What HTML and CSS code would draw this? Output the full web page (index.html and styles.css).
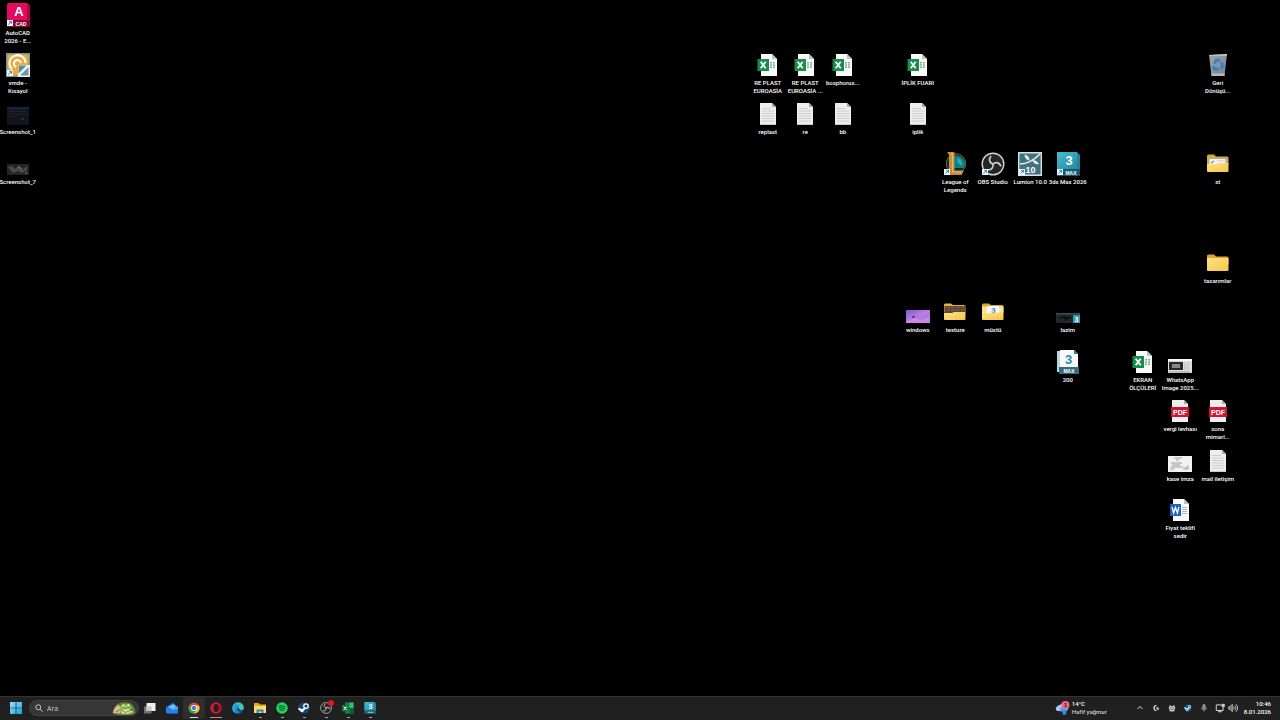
FILE: index.html
```html
<!DOCTYPE html>
<html lang="tr">
<head>
<meta charset="utf-8">
<title>Masaüstü</title>
<link rel="stylesheet" href="styles.css">
</head>
<body>
<svg class="defs" aria-hidden="true">
  <defs>
    <linearGradient id="g-folder" x1="0" y1="0" x2="1" y2="1"><stop offset="0" stop-color="#ffe28a"/><stop offset="1" stop-color="#f6c545"/></linearGradient>
    <linearGradient id="g-purple" x1="0" y1="0" x2="1" y2="1"><stop offset="0" stop-color="#6f63c9"/><stop offset=".5" stop-color="#c07be0"/><stop offset="1" stop-color="#6d7df0"/></linearGradient>
    <linearGradient id="g-bin" x1="0" y1="0" x2="1" y2="1"><stop offset="0" stop-color="#a3a6a9"/><stop offset="1" stop-color="#7d8184"/></linearGradient>
    <linearGradient id="g-edge" x1="0" y1="0" x2="1" y2="1"><stop offset="0" stop-color="#2fb3e8"/><stop offset="1" stop-color="#0b59b0"/></linearGradient>
    <linearGradient id="g-win" x1="0" y1="0" x2="1" y2="1"><stop offset="0" stop-color="#8fe4fb"/><stop offset="1" stop-color="#18a0e4"/></linearGradient>
    <linearGradient id="g-max" x1="0" y1="0" x2="1" y2="1"><stop offset="0" stop-color="#45bdd0"/><stop offset="1" stop-color="#238ba4"/></linearGradient>
  </defs>
  <symbol id="arrow" viewBox="0 0 24 24"><path d="M1 17h6v6H1z" fill="#f3f8fc"/><path d="M2.300 21.700 5.400 18.600M3.200 18.400h2.400v2.400" fill="none" stroke="#1676bd" stroke-width=".9"/></symbol>
  <symbol id="excel" viewBox="0 0 24 24"><path d="M5 1h11l5 5v17H5z" fill="#fafafa"/><path d="M16 1v5h5z" fill="#bfc3c2"/><path d="M14 9h2v1.500h-2zM17 9h2v1.500h-2zM14 11.300h2v1.500h-2zM17 11.300h2v1.500h-2zM14 13.600h2v1.500h-2zM17 13.600h2v1.500h-2z" fill="#79b694"/><path d="M1.500 6H13v12H1.500z" fill="#178c4b"/><path d="m4.700 8.700 5 6.600m0-6.600-5 6.600" stroke="#fff" stroke-width="1.800"/></symbol>
  <symbol id="text" viewBox="0 0 24 24"><path d="M4 1h12l4 4v18H4z" fill="#ededed"/><path d="M16 1v4h4z" fill="#a9a9a9"/><path d="M6 6.500h9M6 9h12M6 11.500h12M6 14h12M6 16.500h12M6 19h12" stroke="#c5c5c5" stroke-width=".8"/><path d="M4 22h16v1H4z" fill="#c9c9c9"/></symbol>
  <symbol id="word" viewBox="0 0 24 24"><path d="M5 1h11l5 5v17H5z" fill="#fafafa"/><path d="M16 1v5h5z" fill="#bfc3c2"/><path d="M14 9.500h5M14 11.500h5M14 13.500h5M14 15.500h5" stroke="#9fbbe2"/><path d="M2 6h11v12H2z" fill="#2361b8"/><path d="m4 8.800 1.600 6.200L7.500 9.500 9.400 15 11 8.800" fill="none" stroke="#fff" stroke-width="1.300"/></symbol>
  <symbol id="pdf" viewBox="0 0 24 24"><path d="M4 1h12l4 4v18H4z" fill="#eee"/><path d="M16 1v4h4z" fill="#aaa"/><path d="M3 8h18v10H3z" fill="#cf1632"/></symbol>
  <symbol id="folder" viewBox="0 0 24 24"><path d="M1 5q0-1.500 1.500-1.500H8L10 5.500h11q1.500 0 1.500 1.500v6H1z" fill="#dda62e"/><path d="M1 7h21.500v12q0 1-1 1H2q-1 0-1-1z" fill="url(#g-folder)"/></symbol>
  <symbol id="max" viewBox="0 0 24 24"><path d="M1 1q0-1 1-1h19l3 3v21H1z" fill="#278198"/><path d="M1 1q0-1 1-1h19v17H1z" fill="url(#g-max)"/><path d="M1 17h23v7H1z" fill="#18566a"/></symbol>
  <symbol id="obs" viewBox="0 0 24 24"><circle cx="12" cy="12" r="10.800" fill="#252527" stroke="#d3d3d3" stroke-width="1.400"/><g fill="none" stroke="#cfcfcf" stroke-width="1.700"><path d="M10 4C7 8 9 11 12 12"/><path d="M10 4C7 8 9 11 12 12" transform="rotate(120 12 12)"/><path d="M10 4C7 8 9 11 12 12" transform="rotate(240 12 12)"/></g></symbol>
</svg>

<main class="desktop">
  <button class="item c1 r1"><span class="art"><svg viewBox="0 0 24 24"><path d="M1 2q0-2 2-2h18l3 2v20q0 2-2 2H1z" fill="#a80643"/><path d="M1 2q0-2 2-2h18v17H1z" fill="#e20b5c"/><path d="M1 17h23v7H1z" fill="#850535"/><text x="13" y="12.800" text-anchor="middle" class="glyph" font-size="13">A</text><text x="15" y="22.500" text-anchor="middle" class="glyph" font-size="5">CAD</text></svg><svg class="shortcut"><use href="#arrow"/></svg></span><span class="label">AutoCAD<br>2026 - E...</span></button>
  <button class="item c1 r2"><span class="art"><svg viewBox="0 0 24 24"><path d="M0 0h24v24H0z" fill="#6e98a5"/><path d="M1.500 1.500h21v21h-21z" fill="#e9ae39"/><path d="M6 16a8 8 0 1 1 13.500-6" fill="none" stroke="#fff" stroke-width="2"/><path d="M10 14a3.600 3.600 0 1 1 5-4" fill="none" stroke="#fff" stroke-width="2"/><path d="M12 12h12v12H12z" fill="#edf4f6"/><path d="m14 22.500 8.500-8.500v8.500z" fill="#6e98a5"/><path d="m12.500 20.500 8-8h-8z" fill="#5b899a"/></svg><svg class="shortcut"><use href="#arrow"/></svg></span><span class="label">vmde -<br>Kısayol</span></button>
  <button class="item c1 r3"><span class="art"><svg viewBox="0 0 24 24"><path d="M1 5h22v18H1z" fill="#12151b"/><path d="M1 5h22v2.500H1z" fill="#142343"/><path d="M3 9.500h17M3 12h18M3 14.500h8" stroke="#20242d"/><path d="M15 17h3" stroke="#3d434f"/></svg></span><span class="label">Screenshot_1</span></button>
  <button class="item c1 r4"><span class="art"><svg viewBox="0 0 24 24"><path d="M1 12h22v11H1z" fill="#252525"/><path d="m2 15 4-1 3 3 4-4 3 5 5-4v4l-5 3-4-2-5 2z" fill="#666" opacity=".6"/><path d="m13 15 3 2m3 4h2" stroke="#888"/></svg></span><span class="label">Screenshot_7</span></button>
  <button class="item c21 r2"><span class="art"><svg><use href="#excel"/></svg></span><span class="label">RE PLAST<br>EUROASİA</span></button>
  <button class="item c22 r2"><span class="art"><svg><use href="#excel"/></svg></span><span class="label">RE PLAST<br>EUROASİA ...</span></button>
  <button class="item c23 r2"><span class="art"><svg><use href="#excel"/></svg></span><span class="label">bosphorus...</span></button>
  <button class="item c25 r2"><span class="art"><svg><use href="#excel"/></svg></span><span class="label">İPLİK FUARI</span></button>
  <button class="item c33 r2"><span class="art"><svg viewBox="0 0 24 24"><path d="m3 2 18-1-2.500 22h-13z" fill="url(#g-bin)"/><path d="m3 2 18-1-.200 1.800H3.200z" fill="#c9ccce"/><path d="m5.500 20.500 13.200-.300-.200 2.800h-13z" fill="#b5b8ba"/><g fill="none" stroke="#2684d2" stroke-width="2.800"><path d="m8.500 10.500 2-3.500 3.500.500M15 9l1.800 4-2.300 2.500M12.500 16.500l-4.500-.500-.500-3"/></g></svg></span><span class="label">Geri<br>Dönüşü...</span></button>
  <button class="item c21 r3"><span class="art"><svg><use href="#text"/></svg></span><span class="label">replast</span></button>
  <button class="item c22 r3"><span class="art"><svg><use href="#text"/></svg></span><span class="label">re</span></button>
  <button class="item c23 r3"><span class="art"><svg><use href="#text"/></svg></span><span class="label">bb</span></button>
  <button class="item c25 r3"><span class="art"><svg><use href="#text"/></svg></span><span class="label">iplik</span></button>
  <button class="item c26 r4"><span class="art"><svg viewBox="0 0 24 24"><circle cx="13" cy="11.500" r="9.700" fill="#082c34" stroke="#806438"/><path d="M11 4a8.500 8.500 0 0 1 10 12H11z" fill="#0e7f89"/><path d="M14 6q6 1 5 8l-4-3z" fill="#2cb0a7"/><path d="M4 0h7.500v18.500H21L18.500 23H4l2-3V3z" fill="#c58e3c"/><path d="M7.500 2h2.200v18H18" fill="none" stroke="#edbf6a"/></svg><svg class="shortcut"><use href="#arrow"/></svg></span><span class="label">League of<br>Legends</span></button>
  <button class="item c27 r4"><span class="art"><svg><use href="#obs"/></svg><svg class="shortcut"><use href="#arrow"/></svg></span><span class="label">OBS Studio</span></button>
  <button class="item c28 r4"><span class="art"><svg viewBox="0 0 24 24"><path d="M.700.700h22.600v22.600H.700z" fill="#43727f" stroke="#d3e3e6" stroke-width="1.400"/><path d="M2 12Q12 12 22 2" fill="none" stroke="#e5eff1" stroke-width="1.600"/><path d="M6.500 2.500q5 1 5 6-5-1-5-6M14 8q4-.500 7 4-5 1-7-4" fill="#e5eff1"/><text x="12.500" y="21" text-anchor="middle" class="glyph" font-size="9">10</text></svg><svg class="shortcut"><use href="#arrow"/></svg></span><span class="label">Lumion 10.0</span></button>
  <button class="item c29 r4"><span class="art"><svg viewBox="0 0 24 24"><use href="#max"/><text x="13" y="13" text-anchor="middle" class="glyph" font-size="13">3</text><text x="15" y="22.500" text-anchor="middle" class="glyph" font-size="5">MAX</text></svg><svg class="shortcut"><use href="#arrow"/></svg></span><span class="label">3ds Max 2026</span></button>
  <button class="item c33 r4"><span class="art"><svg viewBox="0 0 24 24"><path d="M1 4q0-1.500 1.500-1.500H8L10 4.500h11q1.500 0 1.500 1.500v6H1z" fill="#dda62e"/><path d="M2.500 5.500h19V12h-19z" fill="#b9ad91"/><path d="M3.500 7h16v6h-16z" fill="#f4f4f4"/><path d="m5 11 3-2" stroke="#555"/><path d="M11 9h8" stroke="#ccc"/><path d="M1 12h8l2-1h11.500v8q0 1-1 1H2q-1 0-1-1z" fill="url(#g-folder)"/></svg></span><span class="label">st</span></button>
  <button class="item c33 r6"><span class="art"><svg><use href="#folder"/></svg></span><span class="label">tasarımlar</span></button>
  <button class="item c25 r7"><span class="art"><svg viewBox="0 0 24 24"><path d="M0 10h24v13H0z" fill="url(#g-purple)"/><path d="m0 22 8-4 7 2 9-4v7H0z" fill="#df8be4" opacity=".75"/><path d="M6 17h3M7.500 16v2" stroke="#31286c"/></svg></span><span class="label">windows</span></button>
  <button class="item c26 r7"><span class="art"><svg viewBox="0 0 24 24"><path d="M1 5q0-1.500 1.500-1.500H8L10 5h11q1.500 0 1.500 1.500v6H1z" fill="#e8b53c"/><path d="M1.500 6h20.500v7H1.500z" fill="#5b4638"/><path d="M3 7.500h18M3 10h18" stroke="#7b6352" stroke-dasharray="4 1"/><path d="M1 13h8l2-1h11.500v7q0 1-1 1H2q-1 0-1-1z" fill="url(#g-folder)"/></svg></span><span class="label">texture</span></button>
  <button class="item c27 r7"><span class="art"><svg viewBox="0 0 24 24"><path d="M1 5q0-1.500 1.500-1.500H8L10 5h11q1.500 0 1.500 1.500v6H1z" fill="#dda62e"/><path d="M1 6.500h21.500V13H1z" fill="#ffe28a"/><path d="M6 6h12l1 8H6z" fill="#f5f9fb"/><text x="12.500" y="12.500" text-anchor="middle" class="glyph blue" font-size="8">3</text><path d="M1 13h8l2-.500h11.500V19q0 1-1 1H2q-1 0-1-1z" fill="url(#g-folder)"/></svg></span><span class="label">müstü</span></button>
  <button class="item c29 r7"><span class="art"><svg viewBox="0 0 24 24"><path d="M0 13h24v10H0z" fill="#20282a"/><path d="M0 13h24v1.500H0z" fill="#424b4e"/><path d="m3 18 5-1 3 2 4-2M9 16v5" stroke="#090909"/><path d="M17 15h7v8h-7z" fill="#319bae"/><text x="20.500" y="21.500" text-anchor="middle" class="glyph" font-size="7">3</text></svg></span><span class="label">lazim</span></button>
  <button class="item c29 r8"><span class="art"><svg viewBox="0 0 24 24"><path d="M1 1h16l4 4v17H1z" fill="#b5d8dc"/><path d="M4 0h14l4 4v14H4z" fill="#f8fbfc"/><path d="M18 0v4h4z" fill="#347f73"/><path d="M3 17h20v7H3z" fill="#356b7c"/><text x="12.500" y="13.500" text-anchor="middle" class="glyph blue" font-size="13">3</text><text x="13" y="22.500" text-anchor="middle" class="glyph" font-size="5">MAX</text></svg></span><span class="label">200</span></button>
  <button class="item c31 r8"><span class="art"><svg><use href="#excel"/></svg></span><span class="label">EKRAN<br>ÖLÇÜLERİ</span></button>
  <button class="item c32 r8"><span class="art"><svg viewBox="0 0 24 24"><path d="M0 9h24v14H0z" fill="#ddd"/><path d="M0 9h24v2H0z" fill="#f8f8f8"/><path d="M1 12h14v8H1z" fill="#282828"/><path d="M4 14h8v4H4z" fill="#898683"/><path d="M17 13v7M20 13v7" stroke="#bbb"/><path d="M1 22h21" stroke="#999"/></svg></span><span class="label">WhatsApp<br>Image 2025...</span></button>
  <button class="item c32 r9"><span class="art"><svg viewBox="0 0 24 24"><use href="#pdf"/><text x="12" y="15.500" text-anchor="middle" class="glyph" font-size="7">PDF</text></svg></span><span class="label">vergi levhası</span></button>
  <button class="item c33 r9"><span class="art"><svg viewBox="0 0 24 24"><use href="#pdf"/><text x="12" y="15.500" text-anchor="middle" class="glyph" font-size="7">PDF</text></svg></span><span class="label">sona<br>mimarl...</span></button>
  <button class="item c32 r10"><span class="art"><svg viewBox="0 0 24 24"><path d="M0 7h24v16H0z" fill="#f2f2f2"/><g stroke="#777" stroke-width=".7"><path d="M6 9h8M8 11h3M3 14h11M4 16h8M3 18h12M2 20h4m9 0 6-3m-4 4 4-2"/></g></svg></span><span class="label">kase imza</span></button>
  <button class="item c33 r10"><span class="art"><svg><use href="#text"/></svg></span><span class="label">mail iletişim</span></button>
  <button class="item c32 r11"><span class="art"><svg><use href="#word"/></svg></span><span class="label">Fiyat teklifi<br>sedir</span></button>
</main>

<footer class="taskbar">
  <button class="task" aria-label="Başlat"><svg viewBox="0 0 24 24"><path d="M0 0h11.300v11.300H0zM12.700 0H24v11.300H12.700zM0 12.700h11.300V24H0zM12.700 12.700H24V24H12.700z" fill="url(#g-win)"/></svg></button>
  <label class="search">
    <svg class="lens" viewBox="0 0 16 16"><circle cx="6.500" cy="6.500" r="5" fill="none" stroke="#e6e6e6" stroke-width="1.600"/><path d="m10.500 10.500 4.500 4.500" stroke="#e6e6e6" stroke-width="1.900"/></svg>
    <input type="text" placeholder="Ara" aria-label="Ara">
    <svg class="highlight" viewBox="0 0 48 26"><path d="M1 23Q3 8 13 3 25-1 36 2q10 6 11 20-7 4-22 4T1 23" fill="#5b8a35"/><path d="M2 22Q5 9 13 6l6 7-3 10z" fill="#dfb98b"/><path d="M16 12q3-9 12-7 8-2 11 6-3 7-12 6-9 1-11-5" fill="#9fc45d"/><path d="m19 16 12-3 12 7-11 4-14-1z" fill="#d8df9a"/><path d="M19 11q8 5 17-1M7 20l10-5 10 6 12-5" fill="none" stroke="#4f7a35" stroke-width="1.500"/><circle cx="22" cy="7" r="2" fill="#eef2b9"/><circle cx="33" cy="6" r="2" fill="#eef2b9"/><path d="m35 20 9 2-8 3z" fill="#d58f72"/></svg>
  </label>
  <button class="task" aria-label="Görev görünümü"><svg viewBox="0 0 24 24"><path d="M0 9h15v14H0z" fill="#737373"/><path d="M5 2h18v16H5z" fill="#efefef"/><path d="M5 9h10v9H5z" fill="#c4c4c4"/></svg></button>
  <button class="task" aria-label="Posta"><svg viewBox="0 0 24 24"><path d="M0 10 14 1l10 9v10q0 3-3 3H4q-4 0-4-4z" fill="#1762c7"/><path d="m3 10 12-6 6 6-8 6z" fill="#69bdf5"/><path d="m0 10 12 7L24 9v11q0 3-3 3H4q-4 0-4-4z" fill="#2381e8"/><path d="m12 17 12-8v4z" fill="#65b8f7"/></svg></button>
  <button class="task running active" aria-label="Chrome"><svg viewBox="0 0 24 24"><circle cx="12" cy="12" r="11" fill="#e34133"/><path d="M2.500 6.500A11 11 0 0 0 12 23l5-8z" fill="#2ca853"/><path d="M22 7H12l5 8-5 8A11 11 0 0 0 22 7" fill="#fbc02e"/><circle cx="12" cy="12" r="5.800" fill="#fff"/><circle cx="12" cy="12" r="4.400" fill="#397de6"/></svg></button>
  <button class="task running opera" aria-label="Opera"><svg viewBox="0 0 24 24"><circle cx="12" cy="12" r="11.500" fill="#d91838"/><ellipse cx="12" cy="12" rx="5" ry="8" fill="#202020"/><path d="M15 5q6 7 0 14 7-2 7-7t-7-7" fill="#8e142d"/></svg></button>
  <button class="task" aria-label="Edge"><svg viewBox="0 0 24 24"><circle cx="12" cy="12" r="11.500" fill="url(#g-edge)"/><path d="M1 10C4-2 22-2 23.500 11q0 5-6 5-4 0-4-3 2-7-5-7Q3 6 1 10" fill="#42cda0"/><path d="M1 10C4 2 14 0 17 6q-9-3-12 4-1 8 5 13Q-1 20 1 10" fill="#2aa7df"/><path d="M11 13q0 6 9 6 2 0 3-1-7 0-9-5z" fill="#202020"/></svg></button>
  <button class="task running" aria-label="Dosya Gezgini"><svg viewBox="0 0 24 24"><path d="M0 2h9l3 3h12v17H0z" fill="#e6a920"/><path d="M0 8h24v14H0z" fill="#ffda6d"/><path d="M5 15h14v7h-4v-3H9v3H5z" fill="#248bd8"/></svg></button>
  <button class="task running" aria-label="Spotify"><svg viewBox="0 0 24 24"><circle cx="12" cy="12" r="11.500" fill="#20d760"/><path d="M5 8q8-2 14 2M6 12q7-2 12 2M7 16q5-1 9 1" fill="none" stroke="#163c22" stroke-width="2"/></svg></button>
  <button class="task running" aria-label="Steam"><svg viewBox="0 0 24 24"><circle cx="12" cy="12" r="11.500" fill="#164976"/><path d="m1 13 7 4 8-6" fill="none" stroke="#fff" stroke-width="4"/><circle cx="16" cy="8" r="4.500" fill="#163f64" stroke="#fff" stroke-width="2.500"/><circle cx="8" cy="17" r="3.500" fill="#fff"/></svg></button>
  <button class="task running" aria-label="OBS Studio"><svg><use href="#obs"/></svg><span class="record"></span></button>
  <button class="task running" aria-label="Excel"><svg viewBox="0 0 24 24"><path d="M6 1h17v22H6z" fill="#16854a"/><path d="M15 1h8v11h-8z" fill="#37b978"/><path d="M15 12h8v11h-8z" fill="#145c36"/><path d="M0 6h13v13H0z" fill="#10723d"/><path d="m3.500 9 6 7m0-7-6 7" stroke="#fff" stroke-width="2"/></svg></button>
  <button class="task running" aria-label="3ds Max"><svg viewBox="0 0 24 24"><use href="#max"/><text x="13" y="13.500" text-anchor="middle" class="glyph" font-size="14">3</text><path d="M7 20.500h12" stroke="#a9cdd6" stroke-width="2"/></svg></button>

  <button class="weather">
    <svg viewBox="0 0 30 30"><path d="M5 20q-6-2-2-8 2-4 7-4 5-6 10 1 7 1 6 7-1 4-5 4z" fill="#a9c7ef"/><path d="M10 18q0-7 7-7 6 0 9 5l-3 5H10z" fill="#6795df"/><path d="M17 17q8 5 5 9-4 4-7 0-1-4 2-9" fill="#2b8df0"/><circle cx="21" cy="8" r="8" fill="#ed6c83"/><text x="21" y="12" text-anchor="middle" class="glyph dark" font-size="12">1</text></svg>
    <span>14°C<br><span class="condition">Hafif yağmur</span></span>
  </button>
  <button class="tray" aria-label="Gizli simgeler"><svg viewBox="0 0 16 16"><path d="m3 10 5-5 5 5" fill="none" stroke="#eee" stroke-width="1.800"/></svg></button>
  <button class="tray" aria-label="Logitech G HUB"><svg viewBox="0 0 16 16"><path d="M9 3q-5 0-5 5t5 5M8 8h4v4" fill="none" stroke="#eee" stroke-width="2.400"/></svg></button>
  <button class="tray" aria-label="Denetleyici"><svg viewBox="0 0 16 16"><path d="m3 2 3 2h4l3-2v4l2 2-2 2v4l-3 1H6l-3-1v-4L1 8l2-2z" fill="#ddd"/><circle cx="8" cy="9" r="3" fill="none" stroke="#444" stroke-width="1.500"/></svg></button>
  <button class="tray" aria-label="Steam"><svg viewBox="0 0 16 16"><circle cx="8" cy="8" r="7" fill="#175782"/><path d="m1 7 5 4 5-3" fill="none" stroke="#d9edf5" stroke-width="3"/><circle cx="11" cy="5" r="3" fill="#d9edf5"/><circle cx="11" cy="5" r="1.300" fill="#175782"/><circle cx="6" cy="12" r="2.500" fill="#74d2cb"/></svg></button>
  <button class="tray" aria-label="Mikrofon"><svg viewBox="0 0 16 16"><rect x="5.500" y="1" width="5" height="9" rx="2.500" fill="#9b799f" stroke="#d0b8d2"/><path d="M3 7q0 5 5 5t5-5M8 12v3" fill="none" stroke="#c6aec8" stroke-width="1.300"/></svg></button>
  <button class="tray" aria-label="Ağ"><svg class="large" viewBox="0 0 16 16"><path d="M10 3H2v9h11V8M5 14h6M7.500 12v2" fill="none" stroke="#ddd" stroke-width="1.500"/><path d="M11 2h4v4h-4zM13 6v3" fill="#ddd" stroke="#ddd"/></svg></button>
  <button class="tray sound" aria-label="Ses"><svg class="large" viewBox="0 0 16 16"><path d="M1 6h2l4-4v12l-4-4H1z" fill="#777" stroke="#ddd"/><path d="M9 6q2 2 0 4M11 4q4 4 0 8M13 2q5 6 0 12" fill="none" stroke="#ddd" stroke-width="1.300"/></svg></button>
  <button class="clock">10:46<br>8.01.2026</button>
</footer>
</body>
</html>
```

FILE: styles.css
```css
* { box-sizing: border-box; }

body {
  margin: 0;
  min-height: 100vh;
  display: flex;
  flex-direction: column;
  overflow: hidden;
  background: #000;
  color: #fff;
  font-family: Roboto, "Noto Sans", sans-serif;
  font-weight: 500;
  text-rendering: geometricPrecision;
}

button {
  margin: 0;
  padding: 0;
  border: 0;
  background: none;
  color: inherit;
  font: inherit;
}

svg { display: block; }
.defs { position: absolute; width: 0; height: 0; }
.glyph { fill: #fff; font-family: "Liberation Sans", sans-serif; font-weight: 700; }
.glyph.blue { fill: #2f89a9; }
.glyph.dark { fill: #30191e; }

.desktop {
  flex: 1;
  display: grid;
  grid-template-columns: repeat(34, minmax(0, 1fr));
  grid-template-rows: repeat(14, minmax(0, 1fr));
  margin-left: -1px;
  padding: 0 6px 3px 0;
}

.item {
  display: flex;
  flex-direction: column;
  align-items: center;
  gap: 2px;
  padding-top: 3px;
  font-size: 6px;
  line-height: 8px;
  text-align: center;
  white-space: nowrap;
}

.art { position: relative; flex: none; }
.art svg { width: 24px; height: 24px; }
.art .shortcut { position: absolute; inset: 0; }

.c1 { grid-column: 1; }
.c21 { grid-column: 21; }
.c22 { grid-column: 22; }
.c23 { grid-column: 23; }
.c25 { grid-column: 25; }
.c26 { grid-column: 26; }
.c27 { grid-column: 27; }
.c28 { grid-column: 28; }
.c29 { grid-column: 29; }
.c31 { grid-column: 31; }
.c32 { grid-column: 32; }
.c33 { grid-column: 33; }
.r1 { grid-row: 1; }
.r2 { grid-row: 2; }
.r3 { grid-row: 3; }
.r4 { grid-row: 4; }
.r6 { grid-row: 6; }
.r7 { grid-row: 7; }
.r8 { grid-row: 8; }
.r9 { grid-row: 9; }
.r10 { grid-row: 10; }
.r11 { grid-row: 11; }

.taskbar {
  display: flex;
  align-items: center;
  height: 24px;
  padding: 0 9px 0 5px;
  box-shadow: inset 0 1px #343434;
  background: #202020;
  font-size: 6px;
  line-height: 8px;
}

.task {
  position: relative;
  display: grid;
  place-items: center;
  width: 22px;
  height: 22px;
  border-radius: 2px;
}
.task svg { width: 12px; height: 12px; }
.task.active { background: #2e2e2e; }
.task.running::after {
  content: "";
  position: absolute;
  bottom: 1px;
  left: 50%;
  width: 3px;
  height: 1px;
  margin-left: -1px;
  background: #a5a5a5;
}
.task.active::after { width: 8px; margin-left: -4px; background: #ddd; }
.task.opera::after { width: 12px; margin-left: -6px; background: #e3808d; }

.record {
  position: absolute;
  top: 3px;
  right: 3px;
  width: 6px;
  height: 6px;
  border-radius: 50%;
  background: #e5141c;
}

.search {
  display: flex;
  align-items: center;
  width: 110px;
  height: 16px;
  margin: 0 0 0 2px;
  padding: 0 2px 0 5px;
  border: 1px solid #424242;
  border-radius: 8px;
  background: #363636;
}
.lens { width: 8px; height: 8px; flex: none; }
.search input {
  flex: 1;
  min-width: 0;
  margin: 0 0 0 4px;
  padding: 0;
  border: 0;
  background: none;
  color: #ddd;
  font: 7px "Open Sans", "Noto Sans", sans-serif;
}
.search input::placeholder { color: #ccc; opacity: 1; }
.highlight { width: 24px; height: 13px; flex: none; }

.weather {
  display: flex;
  align-items: center;
  gap: 2px;
  margin: 0 25px 0 auto;
  text-align: left;
}
.weather svg { width: 15px; height: 15px; }
.condition { color: #ccc; }

.tray {
  display: grid;
  place-items: center;
  width: 16px;
  height: 22px;
}
.tray svg { width: 8px; height: 8px; }
.tray .large { width: 10px; height: 10px; }
.tray.sound { width: 10px; }
.clock { margin-left: 6px; text-align: right; }
```
